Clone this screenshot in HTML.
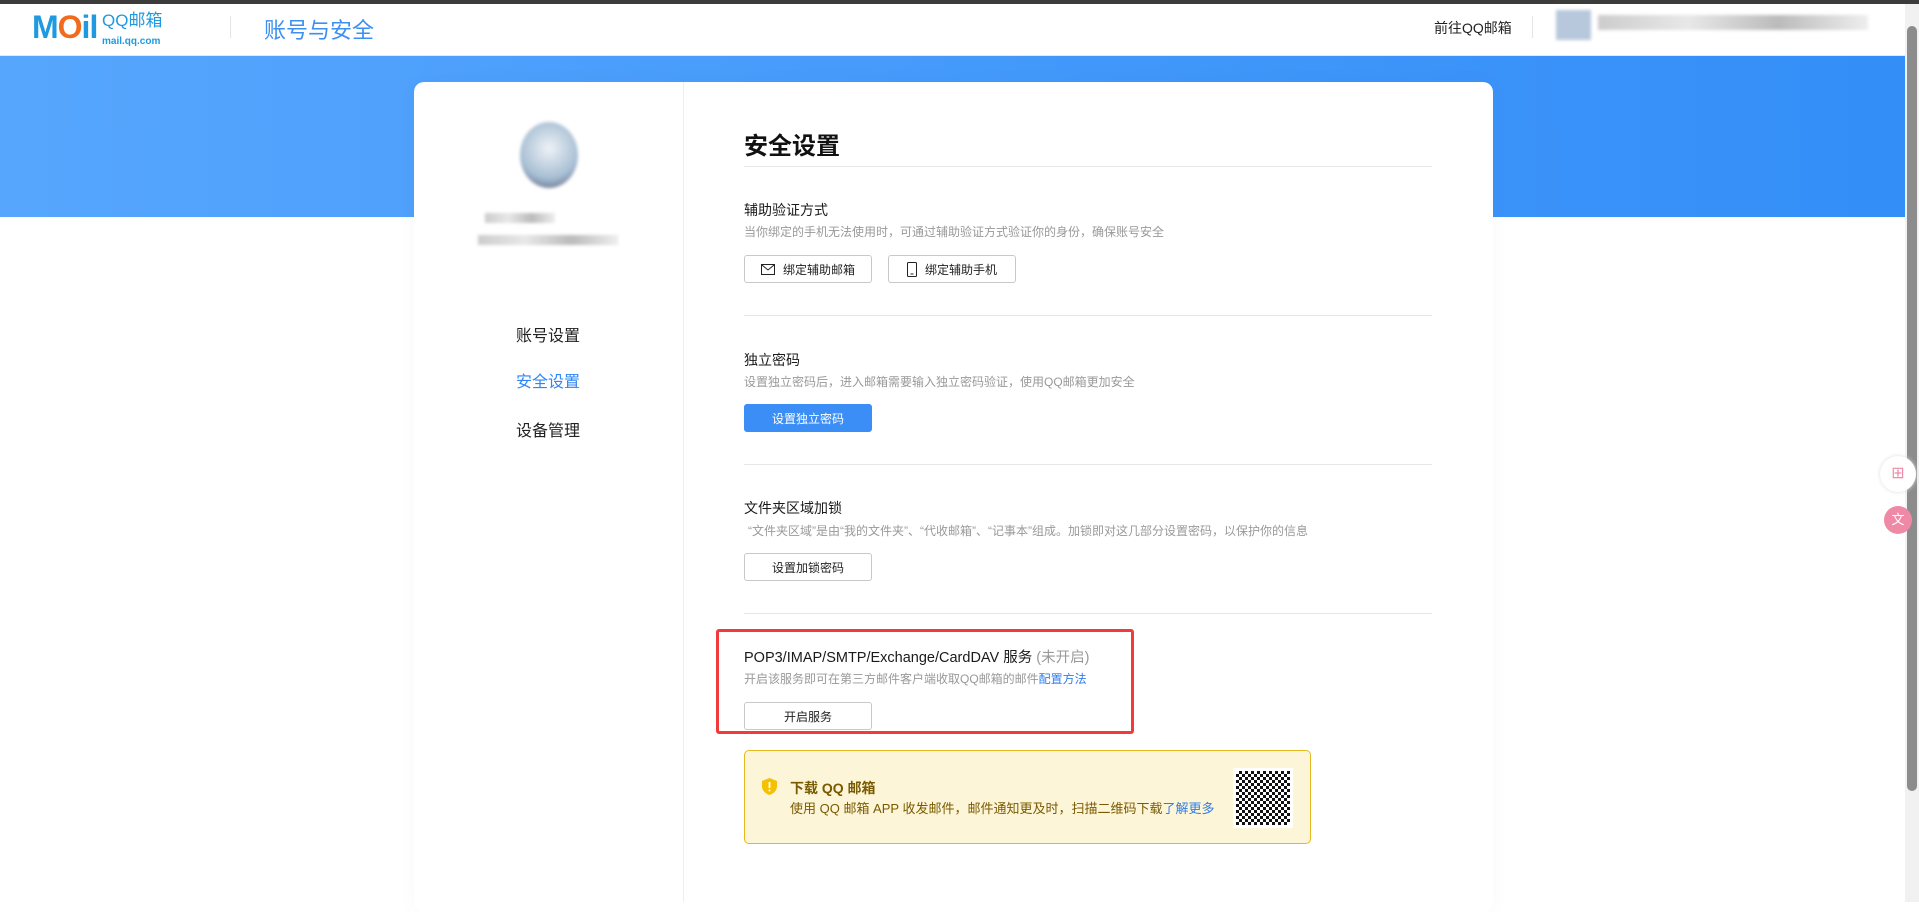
<!DOCTYPE html>
<html><head><meta charset="utf-8"><style>
*{margin:0;padding:0;box-sizing:border-box}
body{width:1919px;height:902px;overflow:hidden;background:#fff;font-family:"Liberation Sans","Noto Sans CJK SC",sans-serif;position:relative;color:#1a1a1a}
.top{position:absolute;left:0;top:0;width:1919px;height:4px;background:#3c3c3c}
.hdr{position:absolute;left:0;top:4px;width:1905px;height:52px;background:#fff;border-bottom:1px solid #e8e8e8}
.band{position:absolute;left:0;top:56px;width:1905px;height:161px;background:linear-gradient(90deg,#56a6fd,#338ef8)}
.card{position:absolute;left:414px;top:82px;width:1079px;height:830px;background:#fff;border-radius:10px;box-shadow:0 0 20px rgba(0,0,0,0.03)}
.side{position:absolute;left:683px;top:82px;width:1px;height:820px;background:#eee}
.a{position:absolute}
.btn{position:absolute;height:28px;border:1px solid #c8c8c8;border-radius:3px;background:#fff;font-size:12px;color:#222;display:flex;align-items:center;justify-content:center;gap:8px}
.hr{position:absolute;left:744px;width:688px;height:1px;background:#e6e6e6}
.t{position:absolute;left:744px;font-size:14px;color:#1a1a1a}
.d{position:absolute;left:744px;font-size:12px;color:#999}
.nav{position:absolute;left:516px;font-size:16px;color:#222}
.blur{position:absolute;background:linear-gradient(90deg,#ccc,#e8e8e8,#bbb,#eee);filter:blur(1.5px)}
</style></head><body>
<div class="top"></div>
<div class="hdr"></div>
<div class="a" style="left:32px;top:9px;font-size:32px;font-weight:bold;color:#1f9ae0;letter-spacing:-1px">M<span style="color:#f26b1d">O</span>il</div>
<div class="a" style="left:102px;top:12px;font-size:17px;color:#1f9ae0;line-height:18px">QQ邮箱<br><span style="font-size:10px;font-weight:bold">mail.qq.com</span></div>
<div class="a" style="left:230px;top:16px;width:1px;height:22px;background:#e5e5e5"></div>
<div class="a" style="left:264px;top:13px;font-size:22px;color:#3d8ff0">账号与安全</div>
<div class="a" style="left:1434px;top:18px;font-size:14px;color:#222">前往QQ邮箱</div>
<div class="a" style="left:1532px;top:16px;width:1px;height:22px;background:#e5e5e5"></div>
<div class="blur" style="left:1556px;top:10px;width:35px;height:30px;background:#b8c8dc"></div>
<div class="blur" style="left:1598px;top:15px;width:270px;height:15px"></div>
<div class="band"></div>
<div class="card"></div>
<div class="side"></div>
<div class="a" style="left:520px;top:122px;width:58px;height:66px;border-radius:50%;background:radial-gradient(circle at 50% 40%,#eef2f6,#a8bfd4 60%,#56607a 95%);filter:blur(1.5px)"></div>
<div class="blur" style="left:485px;top:213px;width:70px;height:10px"></div>
<div class="blur" style="left:478px;top:235px;width:140px;height:10px"></div>
<div class="nav" style="top:322px">账号设置</div>
<div class="nav" style="top:368px;color:#2f86f6">安全设置</div>
<div class="nav" style="top:417px">设备管理</div>

<div class="a" style="left:744px;top:126px;font-size:24px;font-weight:bold;color:#111">安全设置</div>
<div class="hr" style="top:166px"></div>
<div class="t" style="top:200px">辅助验证方式</div>
<div class="d" style="top:223px">当你绑定的手机无法使用时，可通过辅助验证方式验证你的身份，确保账号安全</div>
<div class="btn" style="left:744px;top:255px;width:128px"><svg width="14" height="11"><rect x=".5" y=".5" width="13" height="10" fill="none" stroke="#222"/><path d="M1 1l6 5 6-5" fill="none" stroke="#222"/></svg>绑定辅助邮箱</div>
<div class="btn" style="left:888px;top:255px;width:128px"><svg width="10" height="15"><rect x=".5" y=".5" width="9" height="14" rx="1" fill="none" stroke="#222"/><path d="M3.5 12h3" stroke="#222"/></svg>绑定辅助手机</div>
<div class="hr" style="top:315px"></div>
<div class="t" style="top:350px">独立密码</div>
<div class="d" style="top:373px">设置独立密码后，进入邮箱需要输入独立密码验证，使用QQ邮箱更加安全</div>
<div class="btn" style="left:744px;top:404px;width:128px;background:#3a8ef6;border-color:#3a8ef6;color:#fff">设置独立密码</div>
<div class="hr" style="top:464px"></div>
<div class="t" style="top:498px">文件夹区域加锁</div>
<div class="d" style="top:522px;left:748px">“文件夹区域”是由“我的文件夹”、“代收邮箱”、“记事本”组成。加锁即对这几部分设置密码，以保护你的信息</div>
<div class="btn" style="left:744px;top:553px;width:128px">设置加锁密码</div>
<div class="hr" style="top:613px"></div>
<div class="a" style="left:716px;top:629px;width:418px;height:105px;border:3px solid #f33a3a;border-radius:3px"></div>
<div class="t" style="top:646px;font-size:14.5px">POP3/IMAP/SMTP/Exchange/CardDAV 服务 <span style="color:#999">(未开启)</span></div>
<div class="d" style="top:670px">开启该服务即可在第三方邮件客户端收取QQ邮箱的邮件<span style="color:#2f7de8">配置方法</span></div>
<div class="btn" style="left:744px;top:702px;width:128px">开启服务</div>
<div class="a" style="left:744px;top:750px;width:567px;height:94px;background:#fdf5d8;border:1px solid #e6b820;border-radius:5px"></div>
<svg class="a" style="left:762px;top:778px" width="15" height="17"><path d="M7.5 0L15 3v5c0 5-4 8-7.5 9C4 16 0 13 0 8V3z" fill="#f5c000"/><rect x="6.6" y="4" width="1.8" height="6" fill="#fff"/><rect x="6.6" y="11.5" width="1.8" height="1.8" fill="#fff"/></svg>
<div class="a" style="left:790px;top:778px;font-size:14px;font-weight:bold;color:#7a5a00">下载 QQ 邮箱</div>
<div class="a" style="left:790px;top:798px;font-size:13px;color:#7a5a00">使用 QQ 邮箱 APP 收发邮件，邮件通知更及时，扫描二维码下载<span style="color:#2f7de8">了解更多</span></div>
<div class="a" style="left:1233px;top:768px;width:60px;height:60px;background:repeating-conic-gradient(#111 0 25%,#fff 0 50%) 0 0/6px 6px;border:3px solid #fff"></div>

<div class="a" style="left:1905px;top:4px;width:14px;height:898px;background:#f1f1f1"></div>
<div class="a" style="left:1907px;top:26px;width:10px;height:765px;background:#8c8c8c;border-radius:5px"></div>
<div class="a" style="left:1880px;top:456px;width:36px;height:36px;border-radius:50%;background:#fff;box-shadow:0 0 4px #ddd;color:#f08aa8;font-size:16px;text-align:center;line-height:36px">⊞</div>
<div class="a" style="left:1884px;top:506px;width:28px;height:28px;border-radius:50%;background:#ef8aa6;color:#fff;font-size:13px;text-align:center;line-height:28px">文</div>
</body></html>
